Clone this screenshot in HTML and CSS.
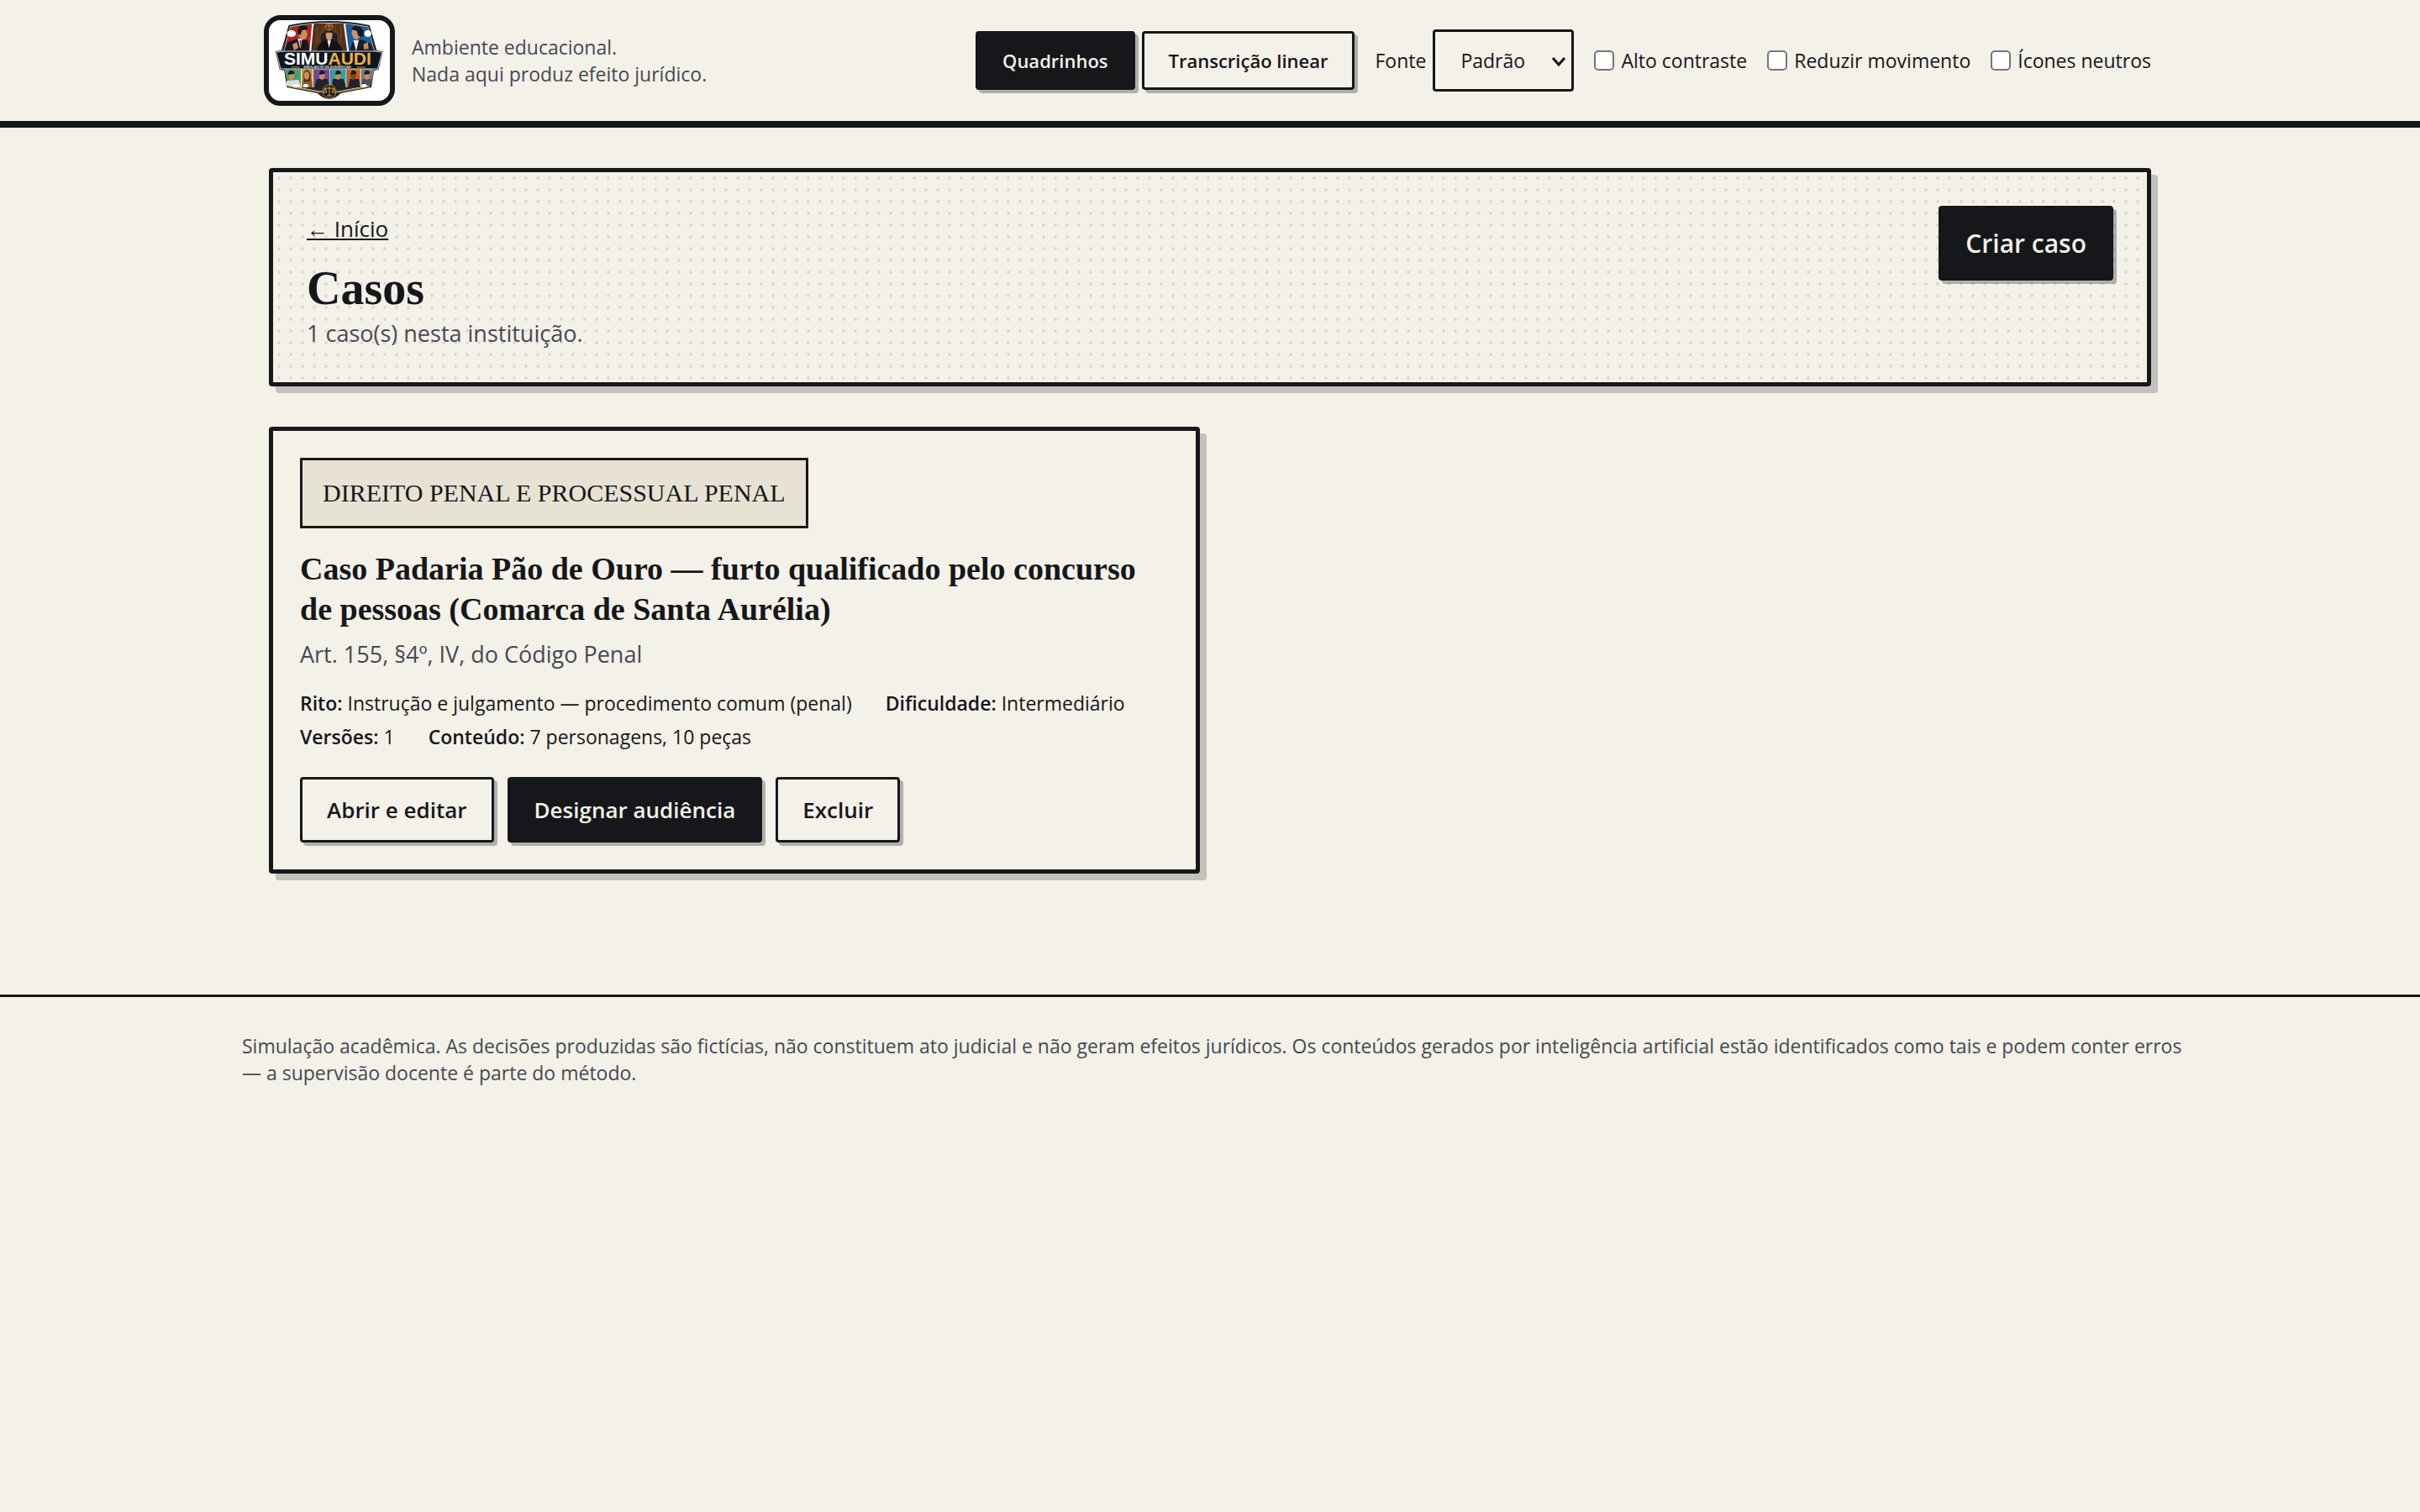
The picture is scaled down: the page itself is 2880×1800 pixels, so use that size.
FILE: index.html
```html
<!DOCTYPE html>
<html lang="pt-BR">
<head>
  <meta charset="UTF-8">
  <meta name="viewport" content="width=device-width, initial-scale=1.0">
  <title>Casos - SimuAudi</title>
  <link rel="stylesheet" href="styles.css">
</head>
<body>
  <header class="topo">
    <div class="topo-conteudo">
      <a class="logo" href="#" aria-label="SimuAudi">
        <svg viewBox="0 0 144 96" aria-hidden="true">
          <rect width="144" height="96" fill="#fff"/>
          <g transform="scale(1.07 1)">
            <!-- escudo -->
            <path d="M22 6 Q67 -4 112 6 L120 36 L127 37 L122 59 L117 60 L114 80 L80 87 Q67 101 54 87 L20 80 L17 60 L12 59 L7 37 L14 36 Z" fill="#24252a"/>
            <path d="M24 8 Q67 -1 110 8 L117 36 L123 39 L119 57 L114 58 L111 78 L78 85 L56 85 L23 78 L20 58 L15 57 L11 39 L17 36 Z" fill="none" stroke="#c9cbd0" stroke-width="1"/>
            <!-- cenas de cima -->
            <path d="M24 9 L49 5 L46 37 L17 37 Z" fill="#b3231f"/>
            <path d="M51 4 L83 4 L87 37 L48 37 Z" fill="#573019"/>
            <path d="M85 5 L110 9 L117 37 L89 37 Z" fill="#1b5f9c"/>
            <path d="M54 6 V28 M60 6 V24 M74 6 V24 M80 6 V28" stroke="#7a4a26"/>
            <path d="M17 37 L21 26 L32 22 L43 24 L46 37 Z" fill="#17191e"/>
            <path d="M32 22 L37 22 L35 34 Z" fill="#eee"/>
            <path d="M34 24 L36 24 L35 32 Z" fill="#8c1f1c"/>
            <path d="M33 12 L41 11 L43 17 L41 22 L37 24 L33 19 Z" fill="#cc8c61"/>
            <path d="M32 16 Q31 7 38 6 Q43 6 43 11 L37 12 L35 18 Z" fill="#1b1410"/>
            <path d="M57 17 Q58 14 62 14 H72 Q76 14 77 17 V32 H57 Z" fill="#26201f" stroke="#6b4a30"/>
            <path d="M53 37 Q54 27 63 24 H71 Q80 27 82 37 Z" fill="#101216"/>
            <path d="M65 24 H69 L67 33 Z" fill="#eee"/>
            <path d="M63 15 H71 L70 22 L67 25 L64 22 Z" fill="#d29a72"/>
            <path d="M63 17 Q62 11 67 11 Q72 11 71 17 L69 14 H65 Z" fill="#2a211c"/>
            <circle cx="67" cy="8" r="4" fill="none" stroke="#b88842"/>
            <path d="M67 4 V11 M64 7 H70" stroke="#b88842"/>
            <path d="M90 37 L93 26 L103 23 L113 28 L117 37 Z" fill="#1b1e26"/>
            <path d="M94 24 L100 24 L97 37 Z" fill="#eee"/>
            <path d="M93 10 L99 10 L101 20 L97 24 L94 21 L92 16 Z" fill="#ce9168"/>
            <path d="M92 11 Q94 5 101 8 Q106 11 105 15 Q107 19 102 20 L99 18 L98 13 Z" fill="#181820"/>
            <path d="M26 29 L31 26 L33 33 L28 36 Z M105 29 L110 26 L111 34 L106 35 Z" fill="#cc8c61"/>
            <path d="M49 4 L46 37 M84 4 L88 37" stroke="#fff" stroke-width="2"/>
            <ellipse cx="25" cy="16" rx="5" ry="4" fill="#fff"/>
            <ellipse cx="110" cy="16" rx="4" ry="4" fill="#fff"/>
            <!-- cenas de baixo -->
            <path d="M17 58 H36 V79 L21 76 Z" fill="#4d9a6f"/>
            <path d="M36 58 H50 V80 H36 Z" fill="#c99032"/>
            <path d="M50 58 H68 V80 H50 Z" fill="#6e4a96"/>
            <path d="M69 58 H86 V80 H69 Z" fill="#36a0a0"/>
            <path d="M87 58 H102 V80 H87 Z" fill="#c35d23"/>
            <path d="M102 58 H117 L114 77 L102 79 Z" fill="#737a80"/>
            <path d="M18 78 L20 72 L33 71 L36 80 Z" fill="#d8dcd8"/>
            <path d="M37 80 L38 71 L47 71 L50 80 Z" fill="#8a5a2a"/>
            <path d="M51 80 L53 70 L65 70 L68 80 Z M70 80 L71 70 L83 70 L86 80 Z M88 80 L90 70 L100 70 L102 80 Z" fill="#20232a"/>
            <path d="M103 79 L104 70 L115 70 L114 77 Z" fill="#4c5158"/>
            <path d="M39 73 Q37 60 42 59 Q48 60 46 73 Z" fill="#5a2b18"/>
            <g fill="#c98c62">
              <ellipse cx="25" cy="66" rx="3" ry="5"/>
              <ellipse cx="42" cy="66" rx="3" ry="5"/>
              <ellipse cx="59" cy="66" rx="3" ry="5"/>
              <ellipse cx="77" cy="66" rx="3" ry="5"/>
              <ellipse cx="94" cy="66" rx="3" ry="5" fill="#7a4628"/>
              <ellipse cx="109" cy="66" rx="3" ry="5"/>
            </g>
            <path d="M21 65 Q22 59 26 60 Q29 61 28 64 Z M56 65 Q56 59 60 60 Q63 61 62 64 Z M74 65 Q74 59 78 60 Q81 61 80 64 Z M91 65 Q91 59 95 60 Q98 61 97 64 Z M106 65 Q106 59 110 60 Q113 61 112 64 Z" fill="#241a16"/>
            <path d="M36 58 V80 M49 58 V80 M68 58 V80 M86 58 V80 M102 58 V80" stroke="#eee"/>
            <ellipse cx="30" cy="78" rx="4" ry="2" fill="#fff"/>
            <ellipse cx="41" cy="78" rx="3" ry="2" fill="#fff"/>
            <ellipse cx="106" cy="78" rx="3" ry="2" fill="#fff"/>
            <!-- faixa do nome -->
            <path d="M8 38 L16 37 H118 L126 38 L121 58 H13 Z" fill="#10161f" stroke="#c9cbd0" stroke-width="1"/>
            <path d="M22 79 L58 86 M112 79 L76 86" stroke="#c08c3c" stroke-width="1"/>
            <path d="M25 56 H34 M98 56 H107" stroke="#c08c3c" stroke-width="1"/>
          </g>
          <text class="logo-nome" x="18" y="53"><tspan fill="#fff">SIMU</tspan><tspan fill="#f0b040">AUDI</tspan></text>
          <text class="logo-lema" x="41" y="57" fill="#ddd">SIMULADOR DE AUDIÊNCIAS</text>
          <!-- balança -->
          <circle cx="72" cy="85" r="8" fill="#1a1a1a" stroke="#b88842" stroke-width="1"/>
          <path d="M72 79 V90 M69 90 H75 M67 81 H77 M67 81 L65 86 H69 Z M77 81 L75 86 H79 Z" stroke="#d9a552" fill="none"/>
        </svg>
      </a>
      <p class="aviso">Ambiente educacional.<br>Nada aqui produz efeito jurídico.</p>
      <div class="preferencias">
        <div class="modos">
          <button type="button" class="botao botao-pequeno botao-cheio" aria-pressed="true">Quadrinhos</button>
          <button type="button" class="botao botao-pequeno" aria-pressed="false">Transcrição linear</button>
        </div>
        <div class="campo-fonte">
          <label for="fonte">Fonte</label>
          <span class="selecao">
            <select id="fonte">
              <option>Padrão</option>
              <option>Grande</option>
            </select>
            <svg class="seta" viewBox="0 0 18 14" aria-hidden="true"><path d="M2 3 L9 11 L16 3"/></svg>
          </span>
        </div>
        <label class="opcao"><input type="checkbox">Alto contraste</label>
        <label class="opcao"><input type="checkbox">Reduzir movimento</label>
        <label class="opcao"><input type="checkbox">Ícones neutros</label>
      </div>
    </div>
  </header>

  <main class="principal">
    <section class="quadro cabecalho">
      <div>
        <a class="voltar" href="#">← Início</a>
        <h1>Casos</h1>
        <p class="total">1 caso(s) nesta instituição.</p>
      </div>
      <button type="button" class="botao botao-grande botao-cheio">Criar caso</button>
    </section>

    <div class="lista">
      <article class="quadro caso">
        <span class="etiqueta">DIREITO PENAL E PROCESSUAL PENAL</span>
        <h2>Caso Padaria Pão de Ouro — furto qualificado pelo concurso de pessoas (Comarca de Santa Aurélia)</h2>
        <p class="artigo">Art. 155, §4º, IV, do Código Penal</p>
        <div class="dados">
          <span><b>Rito:</b> Instrução e julgamento — procedimento comum (penal)</span>
          <span><b>Dificuldade:</b> Intermediário</span>
          <span><b>Versões:</b> 1</span>
          <span><b>Conteúdo:</b> 7 personagens, 10 peças</span>
        </div>
        <div class="acoes">
          <button type="button" class="botao">Abrir e editar</button>
          <button type="button" class="botao botao-cheio">Designar audiência</button>
          <button type="button" class="botao">Excluir</button>
        </div>
      </article>
    </div>
  </main>

  <footer class="rodape">
    <p>Simulação acadêmica. As decisões produzidas são fictícias, não constituem ato judicial e não geram efeitos jurídicos. Os conteúdos gerados por inteligência artificial estão identificados como tais e podem conter erros — a supervisão docente é parte do método.</p>
  </footer>
</body>
</html>
```
FILE: styles.css
```css
:root {
  --papel: #f4f1e8;
  --tinta: #15171a;
  --cinza: #444a52;
  --bege: #e7e2d4;
}

* {
  box-sizing: border-box;
}

body {
  margin: 0;
  background: var(--papel);
  color: var(--tinta);
  font-family: "Segoe UI", "Open Sans", sans-serif;
  font-size: 26px;
  line-height: 40px;
}

h1,
h2,
p {
  margin: 0;
}

/* topo */
.topo {
  border-bottom: 8px solid var(--tinta);
}

.topo-conteudo {
  display: flex;
  align-items: center;
  gap: 20px;
  max-width: 2304px;
  min-height: 144px;
  margin: 0 auto;
  padding: 0 32px 0 26px;
}

.logo {
  width: 156px;
  height: 108px;
  border: 6px solid var(--tinta);
  border-radius: 20px;
  overflow: hidden;
}

.logo svg {
  display: block;
  width: 100%;
  height: 100%;
}

.logo-nome {
  font: bold 21px "Liberation Sans", sans-serif;
}

.logo-lema {
  font: bold 4px "Liberation Sans", sans-serif;
}

.aviso {
  color: var(--cinza);
  font-size: 23px;
  line-height: 32px;
}

.preferencias {
  display: flex;
  align-items: center;
  gap: 24px;
  margin-left: auto;
  font-size: 23px;
}

.modos {
  display: flex;
  gap: 8px;
}

.campo-fonte {
  display: flex;
  align-items: center;
  gap: 8px;
}

.selecao {
  position: relative;
}

.selecao select {
  appearance: none;
  display: block;
  width: 168px;
  height: 74px;
  padding: 0 30px;
  border: 3px solid var(--tinta);
  border-radius: 4px;
  background: var(--papel);
  color: var(--tinta);
  font: inherit;
}

.seta {
  position: absolute;
  top: 31px;
  right: 9px;
  width: 18px;
  height: 14px;
  fill: none;
  stroke: var(--tinta);
  stroke-width: 3;
  pointer-events: none;
}

.opcao {
  display: flex;
  align-items: center;
  gap: 8px;
}

.opcao input {
  appearance: none;
  width: 24px;
  height: 24px;
  margin: 0;
  border: 2px solid #767676;
  border-radius: 5px;
  background: #fff;
}

.opcao input:checked {
  background: var(--tinta);
}

/* botões */
.botao {
  height: 78px;
  padding: 0 29px;
  border: 3px solid var(--tinta);
  border-radius: 4px;
  background: var(--papel);
  box-shadow: 4px 4px 0 rgba(21, 23, 26, 0.3);
  color: var(--tinta);
  font: inherit;
  font-weight: 600;
  cursor: pointer;
}

.botao-pequeno {
  height: 70px;
  font-size: 22px;
}

.botao-grande {
  height: 89px;
  font-size: 30px;
}

.botao-cheio {
  background: var(--tinta);
  color: var(--papel);
}

/* conteúdo */
.principal {
  display: grid;
  gap: 48px;
  max-width: 2304px;
  margin: 0 auto;
  padding: 48px 32px 144px;
}

.quadro {
  border: 5px solid var(--tinta);
  border-radius: 4px;
  background-color: var(--papel);
  box-shadow: 8px 8px 0 rgba(21, 23, 26, 0.22);
}

.cabecalho {
  display: flex;
  justify-content: space-between;
  align-items: flex-start;
  padding: 40px;
  background-image: radial-gradient(circle, rgba(21, 23, 26, 0.1) 2px, transparent 2px);
  background-size: 14px 14px;
}

.voltar {
  display: block;
  width: max-content;
  color: var(--tinta);
  line-height: 54px;
}

h1,
h2,
.etiqueta {
  font-family: Georgia, "Liberation Serif", serif;
}

h1 {
  margin-top: 12px;
  font-size: 56px;
  line-height: 64px;
}

.total,
.artigo {
  color: var(--cinza);
  font-size: 27px;
}

.total {
  margin-top: 4px;
  line-height: 36px;
}

.lista {
  display: grid;
  grid-template-columns: 1fr 1fr;
  gap: 24px;
}

.caso {
  padding: 32px;
}

.etiqueta {
  display: inline-block;
  padding: 19px 24px;
  border: 3px solid var(--tinta);
  background: var(--bege);
  font-size: 30px;
}

h2 {
  margin-top: 24px;
  padding-right: 24px;
  font-size: 38px;
  line-height: 48px;
}

.artigo {
  margin-top: 8px;
  line-height: 44px;
}

.dados {
  display: flex;
  flex-wrap: wrap;
  column-gap: 40px;
  margin-top: 16px;
  font-size: 23px;
}

.dados b {
  font-weight: 600;
}

.acoes {
  display: flex;
  gap: 16px;
  margin-top: 28px;
}

/* rodapé */
.rodape {
  border-top: 3px solid var(--tinta);
  padding: 42px 264px 42px 288px;
  color: var(--cinza);
  font-size: 23px;
  line-height: 32px;
}
```
